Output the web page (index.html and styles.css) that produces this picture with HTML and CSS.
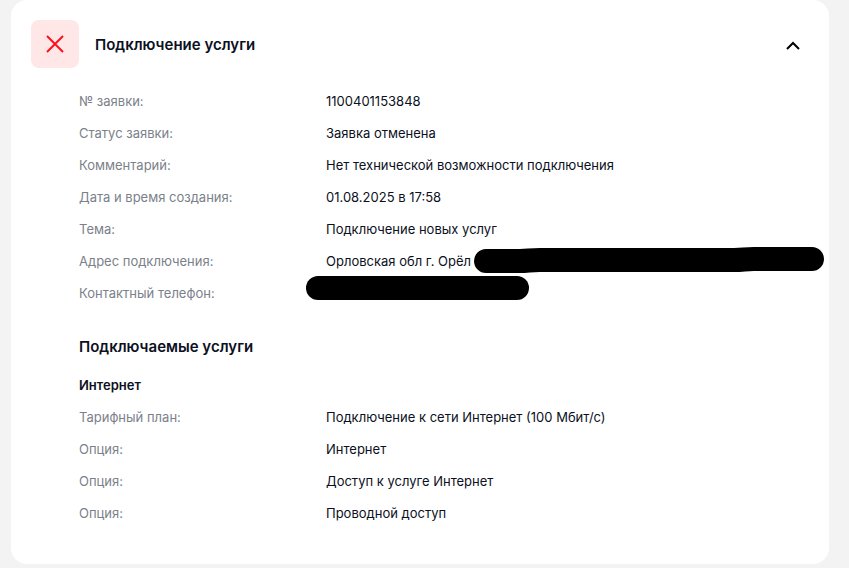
FILE: index.html
```html
<!DOCTYPE html>
<html lang="ru">
<head>
    <meta charset="UTF-8">
    <meta name="viewport" content="width=device-width, initial-scale=1.0">
    <title>Подключение услуги</title>
    <link rel="stylesheet" href="styles.css">
</head>
<body>

    <main class="card">
        <header class="card-header">
            <span class="status-icon">
                <svg width="18" height="18" viewBox="0 0 18 18" aria-hidden="true">
                    <path d="M1 1L17 17M17 1L1 17" fill="none" stroke="#ff0f1e" stroke-width="2"/>
                </svg>
            </span>
            <h1 class="title">Подключение услуги</h1>
            <button class="toggle" type="button" aria-expanded="true" aria-label="Свернуть">
                <svg width="14" height="10" viewBox="0 0 14 10" aria-hidden="true">
                    <path d="M1 9L7 3L13 9" fill="none" stroke="#000" stroke-width="2"/>
                </svg>
            </button>
        </header>

        <div class="card-body">
            <dl class="fields">
                <dt>№ заявки:</dt>
                <dd>1100401153848</dd>
                <dt>Статус заявки:</dt>
                <dd>Заявка отменена</dd>
                <dt>Комментарий:</dt>
                <dd>Нет технической возможности подключения</dd>
                <dt>Дата и время создания:</dt>
                <dd>01.08.2025 в 17:58</dd>
                <dt>Тема:</dt>
                <dd>Подключение новых услуг</dd>
                <dt>Адрес подключения:</dt>
                <dd>Орловская обл г. Орёл
                    <svg class="marker marker-address" width="350" height="26" viewBox="0 0 350 26" aria-hidden="true">
                        <path d="M12 14H46C54 14 56 13 66 13H260C270 13 270 12 280 12H338" fill="none" stroke="#000" stroke-width="24" stroke-linecap="round"/>
                    </svg>
                </dd>
                <dt>Контактный телефон:</dt>
                <dd>
                    <svg class="marker marker-phone" width="223" height="24" viewBox="0 0 223 24" aria-hidden="true">
                        <path d="M12 12H211" fill="none" stroke="#000" stroke-width="24" stroke-linecap="round"/>
                    </svg>
                </dd>
            </dl>

            <h2 class="subtitle">Подключаемые услуги</h2>

            <h3 class="service">Интернет</h3>
            <dl class="fields">
                <dt>Тарифный план:</dt>
                <dd>Подключение к сети Интернет (100 Мбит/с)</dd>
                <dt>Опция:</dt>
                <dd>Интернет</dd>
                <dt>Опция:</dt>
                <dd>Доступ к услуге Интернет</dd>
                <dt>Опция:</dt>
                <dd>Проводной доступ</dd>
            </dl>
        </div>
    </main>

</body>
</html>
```
FILE: styles.css
```css
body {
    margin: 0;
    background-color: #f3f3f3;
    color: #0b1022;
    font-family: Inter, Roboto, sans-serif;
    font-size: 13px;
    line-height: 20px;
}
.card {
    margin: 0 20px 4px 11px;
    padding: 20px 20px 41px;
    border-radius: 16px;
    background-color: #fff;
}
.card-header {
    display: flex;
    align-items: center;
    gap: 16px;
}
.status-icon {
    display: flex;
    align-items: center;
    justify-content: center;
    width: 48px;
    height: 48px;
    border-radius: 8px;
    background-color: #ffe7e8;
}
.title {
    flex: 1;
    margin: 0;
    padding-top: 2px;
    font-size: 15px;
    line-height: 24px;
    font-weight: 600;
}
.toggle {
    display: flex;
    align-items: center;
    justify-content: center;
    width: 32px;
    height: 32px;
    padding: 2px 0 0;
    border: 0;
    background: none;
    cursor: pointer;
}
.card-body {
    padding: 23px 0 0 48px;
}
.fields {
    display: grid;
    grid-template-columns: 247px 1fr;
    row-gap: 12px;
    margin: 0;
}
.fields dt {
    color: #7b818a;
}
.fields dd {
    position: relative;
    margin: 0;
}
.marker {
    position: absolute;
}
.marker-address {
    top: -4px;
    left: 148px;
}
.marker-phone {
    top: -7px;
    left: -20px;
}
.subtitle {
    margin: 32px 0 16px;
    font-size: 15px;
    line-height: 24px;
    font-weight: 600;
}
.service {
    margin: 0 0 12px;
    font-size: 13px;
    line-height: 20px;
    font-weight: 600;
}
```
